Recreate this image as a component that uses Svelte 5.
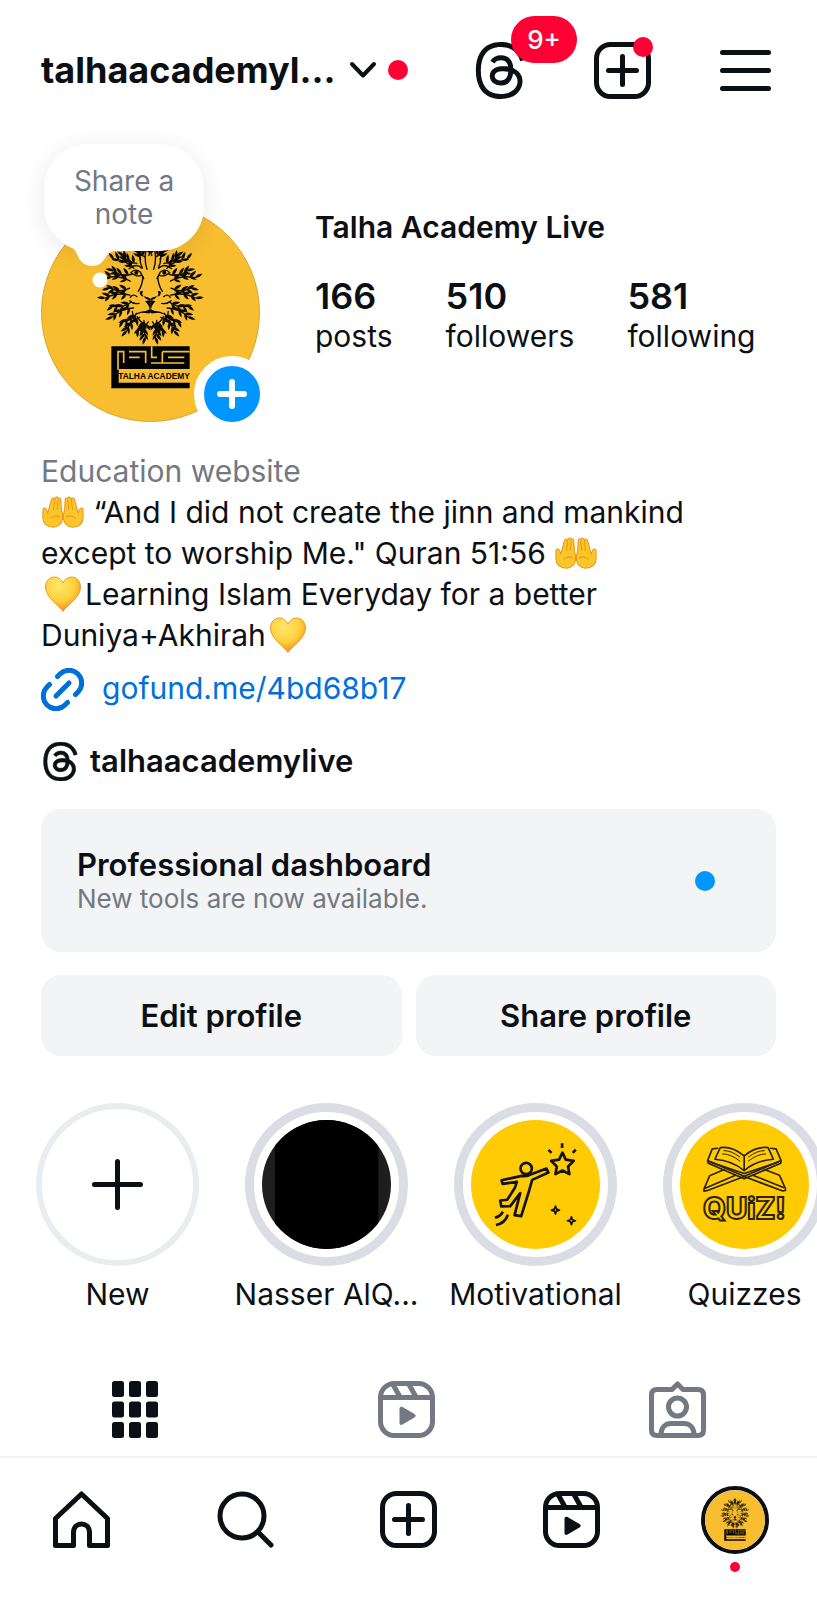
<script lang="ts">
  type Leaf = { x: number; y: number; angle: number; size: number };

  const username = "talhaacademylive";

  const stats = [
    { value: 166, label: "posts" },
    { value: 510, label: "followers" },
    { value: 581, label: "following" },
  ];

  const highlights = [
    { kind: "new", title: "New" },
    { kind: "dark", title: "Nasser AlQ..." },
    { kind: "reach", title: "Motivational" },
    { kind: "quiz", title: "Quizzes" },
  ];

  let activeTab = "grid";

  // one half of the lion's mane, the other one is mirrored
  const stems: string[] = [];
  const leaves: Leaf[] = [];
  const count = 15;

  for (let i = 0; i < count; i++) {
    const deg = -86 + (i * 170) / (count - 1);
    const a = (deg * Math.PI) / 180;
    const reach = i % 2 ? 0.82 : 0.93;
    const x1 = 62 * Math.cos(a);
    const y1 = 100 * Math.sin(a);
    const x2 = 148 * Math.cos(a) * reach;
    const y2 = 156 * Math.sin(a) * reach;
    const bend = i % 2 ? 16 : -14;
    const cx = (x1 + x2) / 2 - Math.sin(a) * bend;
    const cy = (y1 + y2) / 2 + Math.cos(a) * bend;
    stems.push(`M${x1} ${y1}Q${cx} ${cy} ${x2} ${y2}`);

    for (const t of [0.15, 0.5, 0.8, 1]) {
      const u = 1 - t;
      const x = u * u * x1 + 2 * u * t * cx + t * t * x2;
      const y = u * u * y1 + 2 * u * t * cy + t * t * y2;
      if (t === 1) {
        leaves.push({ x, y, angle: deg + bend, size: 0.9 });
      } else {
        leaves.push({ x, y, angle: deg - 30, size: 0.95 });
        leaves.push({ x, y, angle: deg + 34, size: 0.8 });
      }
    }
  }
</script>

{#snippet threads()}
  <svg class="threads" viewBox="0 0 192 192" aria-hidden="true">
    <path
      d="M141.537 88.988C140.71 88.592 139.87 88.21 139.019 87.845C137.537 60.538 122.616 44.905 97.562 44.745C97.448 44.744 97.336 44.744 97.222 44.744C82.236 44.744 69.773 51.141 62.102 62.781L75.881 72.233C81.612 63.538 90.605 61.685 97.229 61.685C97.305 61.685 97.382 61.685 97.458 61.685C105.707 61.738 111.932 64.137 115.961 68.814C118.893 72.219 120.854 76.925 121.825 82.864C114.511 81.621 106.601 81.239 98.145 81.723C74.325 83.095 59.011 96.988 60.04 116.292C60.562 126.084 65.44 134.508 73.775 140.011C80.822 144.663 89.899 146.938 99.332 146.423C111.79 145.74 121.563 140.987 128.381 132.296C133.559 125.696 136.834 117.143 138.28 106.366C144.217 109.949 148.617 114.664 151.047 120.332C155.179 129.967 155.42 145.8 142.501 158.708C131.182 170.016 117.576 174.908 97.014 175.059C74.204 174.89 56.954 167.575 45.738 153.317C35.236 139.966 29.808 120.682 29.605 96C29.808 71.318 35.236 52.034 45.738 38.683C56.954 24.425 74.204 17.11 97.013 16.941C119.988 17.111 137.539 24.461 149.184 38.788C154.894 45.814 159.199 54.649 162.037 64.95L178.184 60.642C174.744 47.962 169.331 37.036 161.965 27.974C147.036 9.607 125.202 .195 97.07 0H96.957C68.882 .194 47.292 9.642 32.788 28.079C19.882 44.486 13.224 67.316 13 95.933V96.068C13.224 124.684 19.882 147.514 32.788 163.921C47.292 182.358 68.882 191.806 96.957 192H97.07C122.03 191.827 139.624 185.292 154.118 170.811C173.081 151.866 172.51 128.119 166.26 113.541C161.776 103.087 153.227 94.596 141.537 88.988ZM98.441 129.507C88 130.095 77.154 125.409 76.62 115.372C76.223 107.93 81.916 99.626 99.081 98.637C101.047 98.523 102.976 98.468 104.871 98.468C111.106 98.468 116.939 99.074 122.242 100.233C120.264 124.935 108.662 128.946 98.441 129.507Z"
    />
  </svg>
{/snippet}

{#snippet create()}
  <svg class="icon" viewBox="0 0 57 57" aria-hidden="true">
    <rect x="2.5" y="2.5" width="52" height="52" rx="14" />
    <path d="M28.5 14.5V42.5M14.5 28.5H42.5" />
  </svg>
{/snippet}

{#snippet reels()}
  <svg class="icon" viewBox="0 0 57 57" aria-hidden="true">
    <rect x="2.5" y="2.5" width="52" height="52" rx="14" />
    <path d="M3 16.5H54M15 3.5L22 16M31 3.5L38 16" />
    <path
      class="solid"
      d="M21.5 27.5V42C21.5 43.7 23 44.5 24.5 43.6L36.5 36.5C38 35.6 38 34 36.5 33.1L24.5 26C23 25.1 21.5 26 21.5 27.5Z"
    />
  </svg>
{/snippet}

{#snippet logo()}
  <svg class="logo" viewBox="64 218 657 657" aria-hidden="true">
    <circle cx="392.5" cy="546.5" r="327" fill="#f8be30" stroke="#d9a62c" stroke-width="3" />
    {#each [1, -1] as side}
      <g transform="translate(392 475) scale({side} 1)">
        {#each stems as d}
          <path {d} fill="none" stroke="#0b0a05" stroke-width="4" stroke-linecap="round" />
        {/each}
        {#each leaves as leaf}
          <path
            d="M0 0Q10 -10 28 0Q11 9 0 0Z"
            fill="#0b0a05"
            transform="translate({leaf.x} {leaf.y}) rotate({leaf.angle}) scale({leaf.size})"
          />
        {/each}
        <g fill="none" stroke="#0b0a05" stroke-width="4" stroke-linecap="round">
          <path d="M12 -118Q20 -90 10 -58M28 -112Q36 -86 24 -62" />
          <path d="M26 -62Q42 -78 64 -60M28 -40Q40 -34 58 -48Q46 -62 30 -50L20 -30" />
          <path d="M22 -36Q24 -10 36 8M4 72Q20 66 42 76M40 24Q52 14 60 26M34 44Q50 48 62 36" />
          <path d="M40 84Q30 102 14 108M54 68Q52 88 40 104" />
        </g>
        <circle cx="42" cy="-48" r="6" />
        <path d="M0 34Q14 34 20 22Q28 26 32 12Q30 4 22 8Q30 22 14 24Q6 26 0 30Z" />
        <path d="M0 34L16 38Q4 48 2 62Q14 70 26 70Q10 76 0 72Z" />
      </g>
    {/each}
    <circle cx="392" cy="590" r="4" />
    <path d="M275 648H510V716H297V757H510V774H275Z" />
    <g fill="none" stroke="#f8be30" stroke-width="5">
      <path d="M295 718V664H312V698M328 664H378V698M328 681H360" />
      <path d="M396 648V681H412M428 664H510M428 664V698M445 681H494M394 698H494" />
    </g>
    <text x="403" y="747" text-anchor="middle" font-size="25">TALHA ACADEMY</text>
  </svg>
{/snippet}

{#snippet hands()}
  <svg class="emoji" viewBox="0 0 40 32" role="img" aria-label="palms up together">
    <g fill="#fcc62b" stroke="#e59a1d" stroke-width="1">
      {#each ["", "translate(40 0) scale(-1 1)"] as transform}
        <path
          {transform}
          d="M1 13Q3 11 4.5 14L5.5 17L9 4Q10.5 1.5 12 3.5Q14 0 15.5 3Q18 1.5 18 5.5L18.5 14Q20 18 19.5 23Q18 30 11 30.5Q1 30 .8 21Z"
        />
        <path {transform} d="M12 4L11 14M15.5 4L14.5 14M8 22Q13 18 17 21" fill="none" />
      {/each}
    </g>
  </svg>
{/snippet}

{#snippet heart()}
  <svg class="emoji" viewBox="0 0 40 36" role="img" aria-label="yellow heart">
    <defs>
      <radialGradient id="heart" cx=".4" cy=".25" r=".8">
        <stop offset="0" stop-color="#ffe76c" />
        <stop offset=".55" stop-color="#fdd03c" />
        <stop offset="1" stop-color="#f08518" />
      </radialGradient>
    </defs>
    <path
      d="M20 35.5C17 30 2.5 22 2.5 11C2.5 5 6.5 1 11.5 1C15.5 1 18.5 3.5 20 7C21.5 3.5 24.5 1 28.5 1C33.5 1 37.5 5 37.5 11C37.5 22 23 30 20 35.5Z"
      fill="url(#heart)"
      stroke="#ee9d2b"
      stroke-width="1"
    />
  </svg>
{/snippet}

<div class="page">
  <header>
    <button class="account" aria-label="Switch account, {username}">
      <h1>talhaacademyl...</h1>
      <svg class="chevron" viewBox="0 0 28 18" aria-hidden="true">
        <path d="M3 3L14 14.5L25 3" />
      </svg>
      <span class="dot"></span>
    </button>
    <div class="actions">
      <button aria-label="Threads">
        {@render threads()}
        <span class="badge">9+</span>
      </button>
      <button aria-label="Create">
        {@render create()}
        <span class="dot corner"></span>
      </button>
      <button aria-label="Menu">
        <svg class="icon menu" viewBox="0 0 51 57" aria-hidden="true">
          <path d="M2.5 10.5H48.5M2.5 28.5H48.5M2.5 46.5H48.5" />
        </svg>
      </button>
    </div>
  </header>

  <main>
    <section class="profile">
      <div class="avatar">
        {@render logo()}
        <svg class="tail" viewBox="0 0 50 50" aria-hidden="true">
          <path d="M0 6Q8 8 11 15Q15 27 26 27Q35 27 40 18Q43 12 50 12V0H0Z" />
          <circle cx="34" cy="41" r="7.5" />
        </svg>
        <button class="note">Share a<br />note</button>
        <button class="add" aria-label="Add to story">
          <svg viewBox="0 0 56 56" aria-hidden="true">
            <path d="M28 16V40M16 28H40" />
          </svg>
        </button>
      </div>
      <div class="info">
        <h2>Talha Academy Live</h2>
        <ul>
          {#each stats as stat}
            <li>
              <strong>{stat.value}</strong>
              <span>{stat.label}</span>
            </li>
          {/each}
        </ul>
      </div>
    </section>

    <section class="bio">
      <p class="category">Education website</p>
      <p>
        {@render hands()} “And I did not create the jinn and mankind<br />
        except to worship Me." Quran 51:56 {@render hands()}<br />
        {@render heart()}Learning Islam Everyday for a better<br />
        Duniya+Akhirah{@render heart()}
      </p>
      <a class="link" href="https://gofund.me/4bd68b17">
        <svg viewBox="0 0 43 43" aria-hidden="true">
          <path d="M16.5 8.5L19 6A12.5 12.5 0 0 1 37 24L34.5 26.5" />
          <path d="M8.5 16.5L6 19A12.5 12.5 0 0 0 24 37L26.5 34.5" />
          <path d="M15 28L28 15" />
        </svg>
        <span>gofund.me/4bd68b17</span>
      </a>
      <a class="handle" href="#threads">
        {@render threads()}
        <span>{username}</span>
      </a>
    </section>

    <button class="dashboard">
      <span class="copy">
        <strong>Professional dashboard</strong>
        <small>New tools are now available.</small>
      </span>
      <span class="dot blue"></span>
    </button>

    <div class="buttons">
      <button>Edit profile</button>
      <button>Share profile</button>
    </div>
  </main>

  <section class="highlights" aria-label="Highlights">
    {#each highlights as item}
      <button>
        <span class="ring {item.kind}">
          {#if item.kind === "new"}
            <svg viewBox="0 0 51 51" aria-hidden="true">
              <path
                d="M25.5 2.5V48.5M2.5 25.5H48.5"
                stroke="#0c1014"
                stroke-width="5"
                stroke-linecap="round"
              />
            </svg>
          {:else if item.kind === "dark"}
            <svg class="cover" viewBox="726 118 388 388" aria-hidden="true">
              <rect x="726" y="118" width="388" height="388" fill="#1e1e1e" />
              <rect x="765" y="118" width="311" height="388" />
            </svg>
          {:else if item.kind === "reach"}
            <svg class="cover" viewBox="95 118 388 388" aria-hidden="true">
              <rect x="95" y="118" width="388" height="388" fill="#ffcb05" />
              <g fill="none" stroke="#15120a" stroke-width="8" stroke-linejoin="round">
                <circle cx="261" cy="264" r="17" />
                <path
                  d="M187 299L248 286Q262 290 276 281L322 264L328 276L279 298L270 330L246 407L226 404L243 338L213 377L186 378L183 360L204 358L227 322L233 304L190 310Z"
                />
                <path d="M370 216L380 237L404 241L387 258L391 281L370 270L349 281L353 258L336 241L360 237Z" />
                <path d="M369 188V202M328 208L337 217M410 207L401 217M167 412Q183 408 191 394M170 434Q198 428 206 403" />
                <path
                  d="M349 377L352 386L361 389L352 392L349 401L346 392L337 389L346 386ZM397 409L400 418L409 421L400 424L397 433L394 424L385 421L394 418Z"
                  stroke-width="5"
                />
              </g>
            </svg>
          {:else}
            <svg class="cover" viewBox="723 118 388 388" aria-hidden="true">
              <rect x="723" y="118" width="388" height="388" fill="#ffcb05" />
              <g fill="none" stroke="#2b2207" stroke-width="5" stroke-linejoin="round">
                <path d="M916 226Q880 196 844 201L828 236Q880 240 916 270Q952 240 1004 236L988 201Q952 196 916 226V270" />
                <path d="M838 203L820 205L806 240L916 287L1027 240L1012 205L994 203M806 240L808 248L916 295L1026 248L1027 240" />
                <path d="M858 266L812 286L795 326V332L806 330L916 288L1030 331L1040 330V324L1022 284L975 266" />
                <path d="M797 324L890 284M942 284L1036 322M812 244L916 279L1020 244" />
                <path d="M854 210Q878 210 904 230M850 220Q876 220 904 242M978 210Q954 210 928 230M982 220Q956 220 928 242" stroke-width="3" />
              </g>
              <text x="917" y="417" text-anchor="middle" font-size="88">QUiZ!</text>
            </svg>
          {/if}
        </span>
        <span class="title">{item.title}</span>
      </button>
    {/each}
  </section>

  <div class="tabs">
    <button
      class:active={activeTab === "grid"}
      aria-label="Posts"
      on:click={() => (activeTab = "grid")}
    >
      <svg class="icon" viewBox="0 0 57 57" aria-hidden="true">
        {#each [0, 1, 2] as row}
          {#each [0, 1, 2] as col}
            <rect class="solid" x={5 + col * 17} y={row * 20.5} width="12" height="16" rx="2.5" />
          {/each}
        {/each}
      </svg>
    </button>
    <button
      class:active={activeTab === "reels"}
      aria-label="Reels"
      on:click={() => (activeTab = "reels")}
    >
      {@render reels()}
    </button>
    <button
      class:active={activeTab === "tagged"}
      aria-label="Tagged"
      on:click={() => (activeTab = "tagged")}
    >
      <svg class="icon" viewBox="0 0 57 57" aria-hidden="true">
        <path
          d="M8 8.5H23L28.5 3L34 8.5H49Q54.5 8.5 54.5 14V49Q54.5 54.5 49 54.5H8Q2.5 54.5 2.5 49V14Q2.5 8.5 8 8.5Z"
        />
        <circle cx="28.5" cy="26" r="9" />
        <path d="M12 54C12 46 17 42.5 22 42.5H35C40 42.5 45 46 45 54" />
      </svg>
    </button>
  </div>

  <nav>
    <a href="#home" aria-label="Home">
      <svg class="icon" viewBox="0 0 57 57" aria-hidden="true">
        <path
          d="M2.5 27.5L28.5 3L54.5 27.5V54.5H36.5V41.5C36.5 30 20.5 30 20.5 41.5V54.5H2.5Z"
        />
      </svg>
    </a>
    <a href="#search" aria-label="Search">
      <svg class="icon" viewBox="0 0 57 57" aria-hidden="true">
        <circle cx="25" cy="25" r="22" />
        <path d="M41 41L54 54" />
      </svg>
    </a>
    <a href="#create" aria-label="Create">{@render create()}</a>
    <a href="#reels" aria-label="Reels">{@render reels()}</a>
    <a class="me" href="#profile" aria-label="Profile">
      {@render logo()}
      <span class="dot small"></span>
    </a>
  </nav>
</div>

<style>
  :global(body) {
    margin: 0;
    background-color: #fff;
  }

  .page {
    overflow: hidden;
    font-family: Inter, "Liberation Sans", sans-serif;
    font-size: 30px;
    line-height: 41px;
    color: #0c1014;
  }

  h1,
  h2,
  p,
  ul {
    margin: 0;
    padding: 0;
  }

  button {
    margin: 0;
    padding: 0;
    border: none;
    background: none;
    font: inherit;
    color: inherit;
    cursor: pointer;
  }

  a {
    color: inherit;
    text-decoration: none;
  }

  svg {
    display: block;
  }

  .icon {
    width: 57px;
    height: 57px;
    fill: none;
    stroke: currentColor;
    stroke-width: 5;
    stroke-linecap: round;
    stroke-linejoin: round;
  }

  .icon .solid {
    fill: currentColor;
    stroke: none;
  }

  .threads {
    width: 57px;
    height: 57px;
    fill: currentColor;
  }

  .dot {
    flex: none;
    width: 20px;
    height: 20px;
    border-radius: 50%;
    background-color: #ff0034;
  }

  .dot.blue {
    background-color: #0095ff;
  }

  header {
    display: flex;
    align-items: center;
    justify-content: space-between;
    height: 140px;
    padding: 0 46px 0 41px;
  }

  .account {
    display: flex;
    align-items: center;
  }

  h1 {
    font-size: 36px;
    font-weight: 700;
  }

  .chevron {
    width: 28px;
    height: 18px;
    margin: 0 11px 0 13px;
    fill: none;
    stroke: currentColor;
    stroke-width: 4;
    stroke-linecap: round;
    stroke-linejoin: round;
  }

  .actions {
    display: flex;
    gap: 65px;
  }

  .actions button {
    position: relative;
  }

  .icon.menu {
    width: 51px;
    margin-left: 4px;
  }

  .badge {
    position: absolute;
    top: -26px;
    right: -48px;
    width: 66px;
    border-radius: 24px;
    background-color: #ff0034;
    color: #fff;
    font-size: 26px;
    font-weight: 500;
    line-height: 47px;
  }

  .corner {
    position: absolute;
    top: -5px;
    right: -2px;
  }

  main {
    padding: 63px 41px 0;
  }

  .profile {
    display: flex;
    gap: 55px;
  }

  .avatar {
    position: relative;
    flex: none;
    width: 219px;
    height: 219px;
  }

  .logo {
    width: 100%;
    height: 100%;
  }

  .logo text {
    font-family: "Liberation Sans Narrow", "Liberation Sans", sans-serif;
    font-weight: 700;
  }

  .note {
    position: absolute;
    top: -59px;
    left: 3px;
    width: 160px;
    padding: 21px 0 20px;
    border-radius: 44px;
    background-color: #fff;
    box-shadow: 0 4px 24px rgba(0, 0, 0, 0.09);
    color: #737882;
    font-size: 28px;
    line-height: 33px;
  }

  .tail {
    position: absolute;
    z-index: 1;
    top: 36px;
    left: 25px;
    width: 50px;
    height: 50px;
    fill: #fff;
    pointer-events: none;
  }

  .add {
    position: absolute;
    right: -10px;
    bottom: -10px;
    border: 10px solid #fff;
    border-radius: 50%;
    background-color: #0095ff;
  }

  .add svg {
    width: 56px;
    height: 56px;
    stroke: #fff;
    stroke-width: 6;
    stroke-linecap: round;
  }

  .info {
    padding-top: 4px;
  }

  h2 {
    font-size: 30px;
    font-weight: 600;
  }

  .info ul {
    display: flex;
    gap: 53px;
    margin-top: 28px;
    list-style: none;
  }

  .info li {
    display: flex;
    flex-direction: column;
  }

  .info strong {
    font-size: 36px;
    font-weight: 600;
    line-height: 40px;
  }

  .bio {
    margin-top: 29px;
  }

  .category {
    color: #737882;
  }

  .emoji {
    display: inline-block;
    width: 42px;
    height: 36px;
    margin: 0 1px;
    vertical-align: -7px;
  }

  .link {
    display: flex;
    align-items: flex-start;
    gap: 18px;
    margin-top: 12px;
    color: #006fdc;
  }

  .link svg {
    width: 43px;
    height: 43px;
    fill: none;
    stroke: currentColor;
    stroke-width: 5;
    stroke-linecap: round;
  }

  .handle {
    display: flex;
    align-items: flex-end;
    gap: 10px;
    margin-top: 29px;
    font-size: 31px;
    font-weight: 600;
  }

  .handle .threads {
    width: 39px;
    height: 39px;
    stroke: currentColor;
    stroke-width: 3;
  }

  .dashboard {
    display: flex;
    align-items: center;
    justify-content: space-between;
    width: 100%;
    margin-top: 28px;
    padding: 38px 61px 37px 36px;
    border-radius: 20px;
    background-color: #f2f4f6;
    text-align: left;
  }

  .copy {
    display: flex;
    flex-direction: column;
  }

  .copy strong {
    font-size: 31px;
    font-weight: 600;
    line-height: 36px;
  }

  .copy small {
    color: #737882;
    font-size: 26px;
    line-height: 32px;
  }

  .buttons {
    display: flex;
    gap: 14px;
    margin-top: 23px;
  }

  .buttons button {
    flex: 1;
    border-radius: 20px;
    background-color: #f2f4f6;
    font-size: 31px;
    font-weight: 600;
    line-height: 81px;
  }

  .highlights {
    display: flex;
    gap: 24px;
    margin-top: 47px;
    padding-left: 25px;
    overflow-x: auto;
    scrollbar-width: none;
  }

  .highlights button {
    flex: none;
    display: flex;
    flex-direction: column;
    align-items: center;
    width: 185px;
  }

  .ring {
    box-sizing: border-box;
    display: grid;
    place-items: center;
    width: 163px;
    height: 163px;
    border: 9px solid #dadde3;
    border-radius: 50%;
  }

  .ring.new {
    border: 6px solid #e9edf0;
  }

  .ring svg {
    width: 51px;
    height: 51px;
  }

  .ring .cover {
    width: 129px;
    height: 129px;
    border-radius: 50%;
  }

  .cover text {
    fill: #ffcb05;
    stroke: #2b2207;
    stroke-width: 6;
    font-weight: 800;
  }

  .title {
    margin-top: 8px;
    white-space: nowrap;
  }

  .tabs {
    display: flex;
    margin-top: 48px;
    padding-right: 4px;
    border-bottom: 2px solid #f3f4f6;
  }

  .tabs button {
    flex: 1;
    display: flex;
    justify-content: center;
    padding: 18px 0;
    color: #737882;
  }

  .tabs button.active {
    color: #0c1014;
  }

  nav {
    display: flex;
    height: 123px;
    padding-bottom: 18px;
  }

  nav a {
    flex: 1;
    display: flex;
    align-items: center;
    justify-content: center;
  }

  .me {
    position: relative;
  }

  .me .logo {
    width: 60px;
    height: 60px;
    border: 4px solid #0c1014;
    border-radius: 50%;
  }

  .small {
    position: absolute;
    bottom: 9px;
    width: 10px;
    height: 10px;
  }
</style>
